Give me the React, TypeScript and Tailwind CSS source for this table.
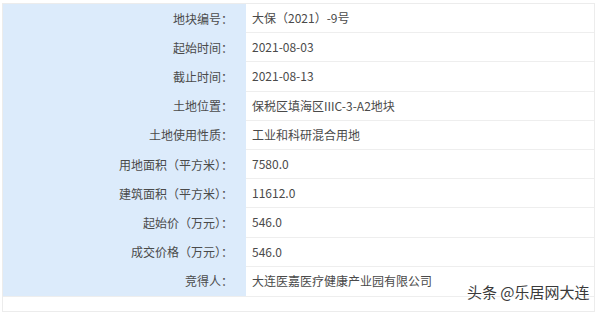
const rows: [string, string][] = [
  ["地块编号：", "大保（2021）-9号"],
  ["起始时间：", "2021-08-03"],
  ["截止时间：", "2021-08-13"],
  ["土地位置：", "保税区填海区IIIC-3-A2地块"],
  ["土地使用性质：", "工业和科研混合用地"],
  ["用地面积（平方米）：", "7580.0"],
  ["建筑面积（平方米）：", "11612.0"],
  ["起始价（万元）：", "546.0"],
  ["成交价格（万元）：", "546.0"],
  ["竞得人：", "大连医嘉医疗健康产业园有限公司"],
];

export default function App() {
  return (
    <div
      className="w-[600px] h-[314px] bg-white pt-[3px] pl-[2px] overflow-hidden relative"
      style={{ fontFamily: '"Noto Sans CJK SC", "Noto Sans", sans-serif' }}
    >
      <div className="w-[593px] h-[309px] border border-[#ececec] bg-white">
        <div className="grid grid-cols-[243px_1fr] text-[12px] text-[#4a4a4a]">
          {rows.map(([label, value], i) => (
            <div key={i} className="contents">
              <div className="h-[29.2px] bg-[#dcebfb] flex items-center justify-end pr-[13px]">
                {label}
              </div>
              <div
                className={
                  "h-[29.2px] flex items-center pl-[6px] border-[#eeeeee] " +
                  (i < rows.length - 1 ? "border-b" : "")
                }
              >
                {value}
              </div>
            </div>
          ))}
        </div>
        <div className="h-[13px] border-t border-[#eeeeee]" />
      </div>
      <div
        className="absolute left-[467px] top-[281px] text-[15px] text-[#3a3a3a]"
        style={{ textShadow: "0 0 2px #fff, 0 0 2px #fff" }}
      >
        头条 @乐居网大连
      </div>
    </div>
  );
}
